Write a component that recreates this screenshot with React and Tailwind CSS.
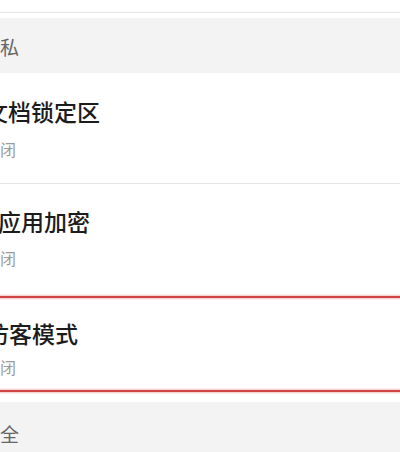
import React from "react";

const font = { fontFamily: '"Noto Sans CJK SC", "Noto Sans", sans-serif' };

function Item({ title, titleOffset, height, pt, gap }) {
  return (
    <div className={`bg-white overflow-hidden ${height}`}>
      <div className={`flex flex-col ${pt}`}>
        <div className={`text-[23px] leading-[23px] font-medium text-[#1c1c1c] whitespace-nowrap ${titleOffset}`}>{title}</div>
        <div className={`text-[16px] leading-[16px] text-[#9a9a9a] whitespace-nowrap ml-[-16px] ${gap}`}>关闭</div>
      </div>
    </div>
  );
}

function RedLine() {
  return <div className="h-[2px] bg-[#d04545] shadow-[0_0_2px_1px_rgba(230,110,110,0.4)] relative z-10" />;
}

export default function App() {
  return (
    <div className="w-[400px] h-[452px] overflow-hidden bg-white flex flex-col" style={font}>
      <div className="h-[12px] bg-white shrink-0" />
      <div className="h-px bg-[#e6e6e6] shrink-0" />
      <div className="h-[5px] bg-white shrink-0" />
      <div className="h-[55px] bg-[#f3f3f3] shrink-0 flex items-center overflow-hidden">
        <span className="ml-[-19px] mt-[1px] text-[19px] leading-[19px] text-[#666666] whitespace-nowrap">隐私</span>
      </div>
      <div className="shrink-0">
        <Item title="文档锁定区" titleOffset="ml-[-15px]" height="h-[110px]" pt="pt-[27px]" gap="mt-[18px]" />
      </div>
      <div className="h-px bg-[#e6e6e6] shrink-0" />
      <div className="shrink-0">
        <Item title="应用加密" titleOffset="ml-[-2px]" height="h-[112px]" pt="pt-[26px]" gap="mt-[17px]" />
      </div>
      <RedLine />
      <div className="shrink-0">
        <Item title="访客模式" titleOffset="ml-[-14px]" height="h-[92px]" pt="pt-[24px]" gap="mt-[14px]" />
      </div>
      <RedLine />
      <div className="h-[10px] bg-white shrink-0" />
      <div className="flex-1 bg-[#f3f3f3] flex items-start overflow-hidden">
        <span className="mt-[22px] ml-[-19px] text-[19px] leading-[19px] text-[#666666] whitespace-nowrap">安全</span>
      </div>
    </div>
  );
}
